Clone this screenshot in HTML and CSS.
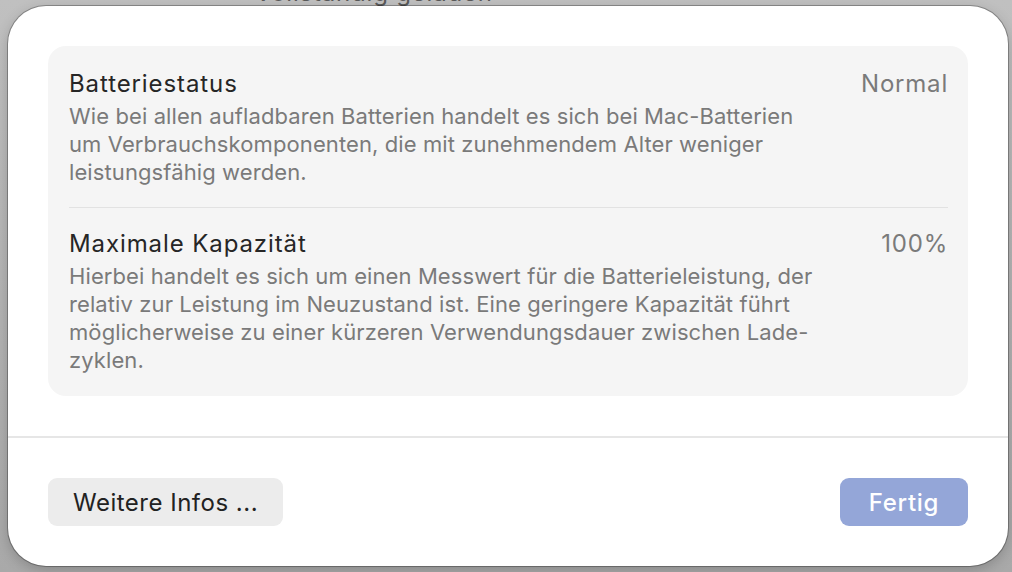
FILE: index.html
```html
<!DOCTYPE html>
<html lang="de">
<head>
    <meta charset="UTF-8">
    <meta name="viewport" content="width=device-width, initial-scale=1.0">
    <title>Batteriezustand</title>
    <link rel="stylesheet" href="styles.css">
</head>
<body>
    <!-- window behind the sheet -->
    <div class="backdrop">
        <span class="backdrop-title">Vollständig geladen</span>
    </div>

    <div class="sheet">
        <div class="sheet-body">
            <div class="card">
                <div class="card-row">
                    <div class="row-head">
                        <span class="row-title">Batteriestatus</span>
                        <span class="row-value">Normal</span>
                    </div>
                    <p class="row-text">
                        Wie bei allen aufladbaren Batterien handelt es sich bei Mac-Batterien<br>
                        um Verbrauchskomponenten, die mit zunehmendem Alter weniger<br>
                        leistungsfähig werden.
                    </p>
                </div>

                <div class="card-row">
                    <div class="row-head">
                        <span class="row-title">Maximale Kapazität</span>
                        <span class="row-value">100%</span>
                    </div>
                    <p class="row-text">
                        Hierbei handelt es sich um einen Messwert für die Batterieleistung, der<br>
                        relativ zur Leistung im Neuzustand ist. Eine geringere Kapazität führt<br>
                        möglicherweise zu einer kürzeren Verwendungsdauer zwischen Lade-<br>
                        zyklen.
                    </p>
                </div>
            </div>
        </div>

        <div class="sheet-footer">
            <button class="btn">Weitere Infos ...</button>
            <button class="btn btn-primary" disabled>Fertig</button>
        </div>
    </div>
</body>
</html>
```

FILE: styles.css
```css
html, body {
    height: 100%;
}

body {
    margin: 0;
    background: linear-gradient(to bottom, #c0c0c0, #a9a9a9);
    font-family: Inter, "Noto Sans", sans-serif;
    overflow: hidden;
    position: relative;
}

.backdrop {
    height: 100%;
}

.backdrop-title {
    position: absolute;
    top: -22px;
    left: 255px;
    font-size: 24px;
    letter-spacing: 0.8px;
    color: #5a5a5a;
}

.sheet {
    position: absolute;
    top: 6px;
    left: 8px;
    width: 1000px;
    height: 560px;
    background: #fff;
    border-radius: 38px;
    box-shadow: 0 0 0 1px rgba(0, 0, 0, 0.28), 0 4px 14px rgba(0, 0, 0, 0.2);
    display: flex;
    flex-direction: column;
    overflow: hidden;
}

.sheet-body {
    padding: 40px 40px 40px;
}

.card {
    background: #f5f5f5;
    border-radius: 18px;
    padding: 24px 20px 22px 21px;
}

.card-row + .card-row {
    border-top: 1px solid #e2e2e2;
    margin-top: 21px;
    padding-top: 22px;
}

.row-head {
    display: flex;
    justify-content: space-between;
    align-items: baseline;
    line-height: 28px;
}

.row-title {
    font-size: 24px;
    letter-spacing: 0.9px;
    color: #262626;
}

.row-value {
    font-size: 24px;
    letter-spacing: 0.8px;
    color: #7a7a7a;
}

.row-text {
    margin: 4px 0 0;
    font-size: 22px;
    letter-spacing: 0.1px;
    line-height: 28px;
    color: #7a7a7a;
}

.sheet-footer {
    border-top: 2px solid #e6e6e6;
    flex: 1;
    display: flex;
    justify-content: space-between;
    align-items: flex-start;
    padding: 40px 40px 0;
}

.btn {
    height: 48px;
    padding: 0 25px;
    border: none;
    border-radius: 9px;
    background: #ececec;
    color: #222;
    font-family: inherit;
    font-size: 24px;
    letter-spacing: 0.5px;
    cursor: pointer;
}

.btn-primary {
    width: 128px;
    background: #94a6d8;
    color: #fff;
    font-weight: 500;
    letter-spacing: 0.7px;
}
```
